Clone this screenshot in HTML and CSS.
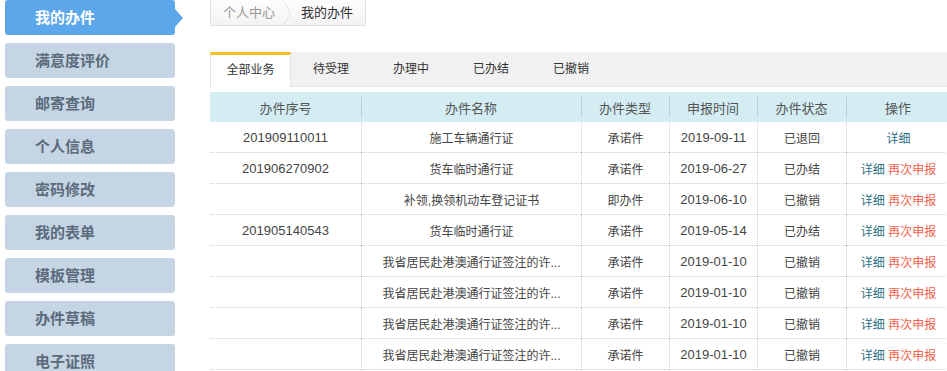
FILE: index.html
```html
<!DOCTYPE html>
<html lang="zh-CN">
<head>
    <meta charset="UTF-8">
    <title>我的办件</title>
    <link rel="stylesheet" href="styles.css">
</head>
<body>
    <div class="page">
        <!-- 左侧菜单 -->
        <ul class="side-menu">
            <li class="active">我的办件</li>
            <li>满意度评价</li>
            <li>邮寄查询</li>
            <li>个人信息</li>
            <li>密码修改</li>
            <li>我的表单</li>
            <li>模板管理</li>
            <li>办件草稿</li>
            <li>电子证照</li>
        </ul>

        <div class="main">
            <div class="crumb">
                <span class="crumb-item">个人中心</span>
                <span class="crumb-item current">我的办件</span>
            </div>

            <div class="tabs">
                <span class="tab active">全部业务</span>
                <span class="tab">待受理</span>
                <span class="tab">办理中</span>
                <span class="tab">已办结</span>
                <span class="tab">已撤销</span>
            </div>

            <table class="list">
                <thead>
                    <tr>
                        <th class="c-no">办件序号</th>
                        <th class="c-name">办件名称</th>
                        <th class="c-type">办件类型</th>
                        <th class="c-date">申报时间</th>
                        <th class="c-state">办件状态</th>
                        <th class="c-op">操作</th>
                    </tr>
                </thead>
                <tbody>
                    <tr>
                        <td class="num">201909110011</td>
                        <td>施工车辆通行证</td>
                        <td>承诺件</td>
                        <td class="num">2019-09-11</td>
                        <td>已退回</td>
                        <td><a class="detail">详细</a></td>
                    </tr>
                    <tr>
                        <td class="num">201906270902</td>
                        <td>货车临时通行证</td>
                        <td>承诺件</td>
                        <td class="num">2019-06-27</td>
                        <td>已办结</td>
                        <td><a class="detail">详细</a> <a class="again">再次申报</a></td>
                    </tr>
                    <tr>
                        <td class="num"></td>
                        <td>补领,换领机动车登记证书</td>
                        <td>即办件</td>
                        <td class="num">2019-06-10</td>
                        <td>已撤销</td>
                        <td><a class="detail">详细</a> <a class="again">再次申报</a></td>
                    </tr>
                    <tr>
                        <td class="num">201905140543</td>
                        <td>货车临时通行证</td>
                        <td>承诺件</td>
                        <td class="num">2019-05-14</td>
                        <td>已办结</td>
                        <td><a class="detail">详细</a> <a class="again">再次申报</a></td>
                    </tr>
                    <tr>
                        <td class="num"></td>
                        <td>我省居民赴港澳通行证签注的许...</td>
                        <td>承诺件</td>
                        <td class="num">2019-01-10</td>
                        <td>已撤销</td>
                        <td><a class="detail">详细</a> <a class="again">再次申报</a></td>
                    </tr>
                    <tr>
                        <td class="num"></td>
                        <td>我省居民赴港澳通行证签注的许...</td>
                        <td>承诺件</td>
                        <td class="num">2019-01-10</td>
                        <td>已撤销</td>
                        <td><a class="detail">详细</a> <a class="again">再次申报</a></td>
                    </tr>
                    <tr>
                        <td class="num"></td>
                        <td>我省居民赴港澳通行证签注的许...</td>
                        <td>承诺件</td>
                        <td class="num">2019-01-10</td>
                        <td>已撤销</td>
                        <td><a class="detail">详细</a> <a class="again">再次申报</a></td>
                    </tr>
                    <tr>
                        <td class="num"></td>
                        <td>我省居民赴港澳通行证签注的许...</td>
                        <td>承诺件</td>
                        <td class="num">2019-01-10</td>
                        <td>已撤销</td>
                        <td><a class="detail">详细</a> <a class="again">再次申报</a></td>
                    </tr>
                </tbody>
            </table>
        </div>
    </div>
</body>
</html>
```

FILE: styles.css
```css
* {
    margin: 0;
    padding: 0;
    box-sizing: border-box;
}

body {
    font-family: "Liberation Sans", "Noto Sans CJK SC", sans-serif;
    font-size: 12px;
    color: #333;
    background: #fff;
    overflow: hidden;
}

.page {
    display: flex;
    gap: 35px;
    padding-left: 5px;
}

/* 左侧菜单 */
.side-menu {
    list-style: none;
    width: 170px;
    flex-shrink: 0;
    display: flex;
    flex-direction: column;
    gap: 8px;
}

.side-menu li {
    position: relative;
    height: 35px;
    line-height: 35px;
    padding-left: 30px;
    background: #c6d5e4;
    border-radius: 3px;
    color: #5b6b7c;
    font-size: 15px;
    font-weight: bold;
}

.side-menu li.active {
    background: #5ba7ea;
    color: #fff;
}

.side-menu li.active::after {
    content: "";
    position: absolute;
    right: -8px;
    top: 9px;
    border-top: 9px solid transparent;
    border-bottom: 9px solid transparent;
    border-left: 8px solid #5ba7ea;
}

/* 右侧内容 */
.main {
    flex: 1;
    min-width: 0;
}

.crumb {
    display: inline-flex;
    height: 26px;
    border: 1px solid #e3e3e3;
    border-top: none;
    background: linear-gradient(#fdfdfd, #f3f3f3);
    font-size: 13px;
}

.crumb-item {
    position: relative;
    line-height: 25px;
    padding: 0 12px;
    color: #999;
}

.crumb-item:first-child {
    padding-right: 20px;
}

.crumb-item:first-child::after {
    content: "";
    position: absolute;
    right: 2px;
    top: 4px;
    width: 17px;
    height: 17px;
    border-top: 1px solid #ddd;
    border-right: 1px solid #ddd;
    transform: scaleX(0.55) rotate(45deg);
}

.crumb-item.current {
    color: #333;
    padding-left: 6px;
}

.tabs {
    display: flex;
    margin-top: 26px;
    height: 35px;
    background: #f1f1f1;
    border-bottom: 1px solid #e2e2e2;
}

.tab {
    width: 80px;
    text-align: center;
    line-height: 34px;
    color: #333;
}

.tab.active {
    width: 81px;
    background: #fff;
    border-top: 3px solid #f5c02b;
    border-left: 1px solid #e2e2e2;
    border-right: 1px solid #e2e2e2;
    line-height: 30px;
    height: 35px;
}

/* 办件列表 */
.list {
    margin-top: 5px;
    width: 740px;
    border-collapse: separate;
    border-spacing: 0;
    table-layout: fixed;
}

.list th {
    height: 30px;
    padding: 0;
    background: #d3edf2;
    font-weight: normal;
    font-size: 13px;
    color: #555;
    position: relative;
}

.list th + th::before {
    content: "";
    position: absolute;
    left: 0;
    top: 5px;
    bottom: 5px;
    border-left: 1px solid #b9cfd5;
}

.list td {
    height: 31px;
    padding: 0;
    text-align: center;
    border-bottom: 1px dotted #ccc;
    border-left: 1px dotted #ccc;
    color: #444;
    white-space: nowrap;
}

.list td.num {
    font-size: 13px;
}

.list td:first-child {
    border-left: none;
}

.c-no { width: 151px; }
.c-name { width: 220px; }
.c-type { width: 88px; }
.c-date { width: 88px; }
.c-state { width: 89px; }
.c-op { width: 104px; }

.detail {
    color: #2c6f82;
}

.again {
    color: #f2624b;
}
```
